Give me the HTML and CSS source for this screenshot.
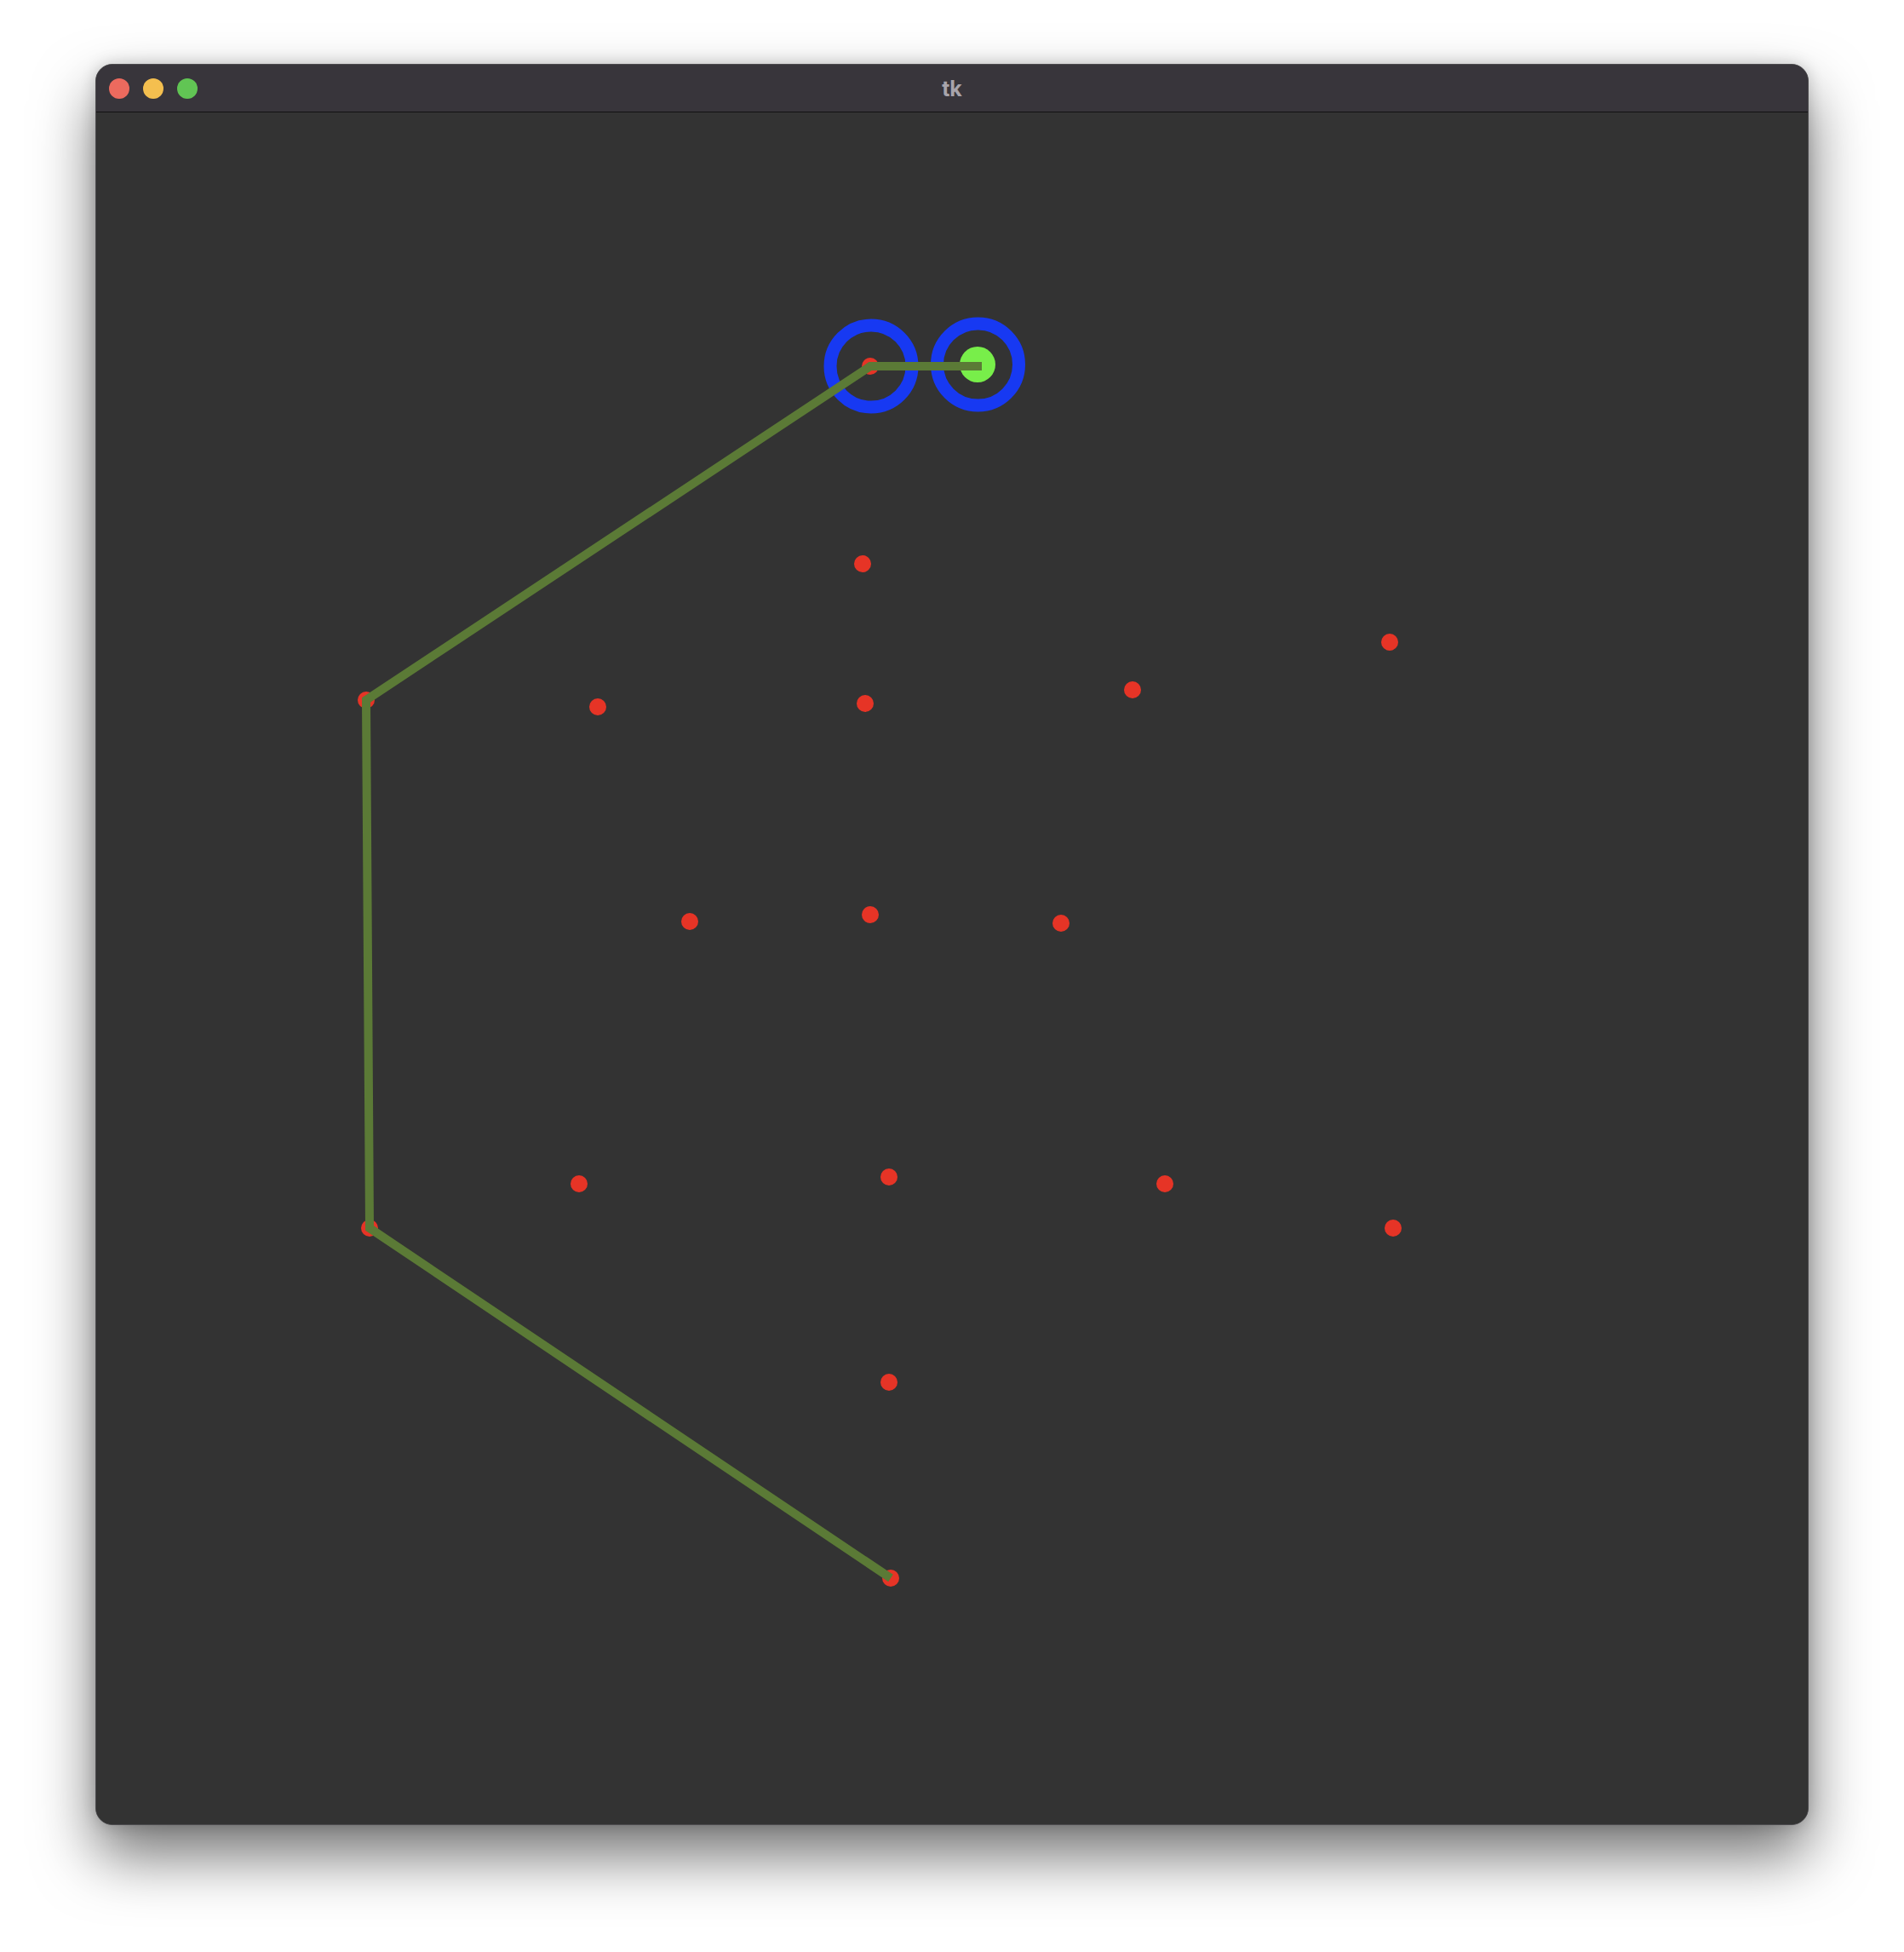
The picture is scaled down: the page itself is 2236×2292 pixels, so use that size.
FILE: index.html
```html
<!DOCTYPE html>
<html>
<head>
<meta charset="utf-8">
<title>tk</title>
<link rel="stylesheet" href="styles.css">
</head>
<body>
<div class="window">
  <div class="titlebar">
    <div class="lights">
      <span class="light red"></span>
      <span class="light yellow"></span>
      <span class="light green"></span>
    </div>
    <div class="title">tk</div>
  </div>
  <div class="canvas">
    <svg class="drawing" viewBox="113 132 2010 2010" width="2010" height="2010" xmlns="http://www.w3.org/2000/svg">
      <g class="dots">
        <circle cx="1022" cy="430" r="10"/>
        <circle cx="430" cy="822" r="10"/>
        <circle cx="434" cy="1442" r="10"/>
        <circle cx="1046" cy="1853" r="10"/>
        <circle cx="1013" cy="662" r="10"/>
        <circle cx="1632" cy="754" r="10"/>
        <circle cx="702" cy="830" r="10"/>
        <circle cx="1016" cy="826" r="10"/>
        <circle cx="1330" cy="810" r="10"/>
        <circle cx="810" cy="1082" r="10"/>
        <circle cx="1022" cy="1074" r="10"/>
        <circle cx="1246" cy="1084" r="10"/>
        <circle cx="680" cy="1390" r="10"/>
        <circle cx="1044" cy="1382" r="10"/>
        <circle cx="1368" cy="1390" r="10"/>
        <circle cx="1636" cy="1442" r="10"/>
        <circle cx="1044" cy="1623" r="10"/>
      </g>
      <circle class="ring" cx="1023" cy="430" r="48"/>
      <circle class="ring" cx="1148.5" cy="428" r="48"/>
      <circle class="goal" cx="1148" cy="428" r="21"/>
      <polyline class="path" points="1153,430 1022,430 430,822 434,1442 1046,1853"/>
    </svg>
  </div>
</div>
</body>
</html>
```
FILE: styles.css
```css
html, body {
  margin: 0;
  padding: 0;
  background: #ffffff;
}

body {
  width: 2236px;
  height: 2292px;
  overflow: hidden;
  padding-top: 75px;
  padding-left: 112px;
  box-sizing: border-box;
}

.window {
  width: 2012px;
  height: 2068px;
  box-sizing: border-box;
  border: 1px solid #4c4b4e;
  border-radius: 20px;
  overflow: hidden;
  display: flex;
  flex-direction: column;
  background: #333333;
  box-shadow: 0 36px 70px rgba(0, 0, 0, 0.55), 0 0 18px rgba(0, 0, 0, 0.18);
}

.titlebar {
  height: 55px;
  flex: 0 0 auto;
  background: #38353b;
  border-bottom: 1px solid #121212;
  display: flex;
  align-items: center;
  position: relative;
}

.lights {
  display: flex;
  gap: 16px;
  padding-left: 15px;
}

.light {
  width: 24px;
  height: 24px;
  border-radius: 50%;
  display: block;
}

.light.red { background: #ec6a5e; }
.light.yellow { background: #f4bf4f; }
.light.green { background: #61c554; }

.title {
  position: absolute;
  left: 0;
  right: 0;
  top: 0;
  bottom: 0;
  display: flex;
  align-items: center;
  justify-content: center;
  font-family: "Inter", "Liberation Sans", sans-serif;
  font-weight: 700;
  font-size: 25px;
  color: #a8a4ab;
}

.canvas {
  flex: 1 1 auto;
  background: #333333;
}

.drawing {
  display: block;
}

.dots circle {
  fill: #e63426;
}

.ring {
  fill: none;
  stroke: #1739f2;
  stroke-width: 15;
}

.goal {
  fill: #78ee4a;
}

.path {
  fill: none;
  stroke: #5b7a36;
  stroke-width: 10;
  stroke-linecap: butt;
  stroke-linejoin: miter;
}
```
